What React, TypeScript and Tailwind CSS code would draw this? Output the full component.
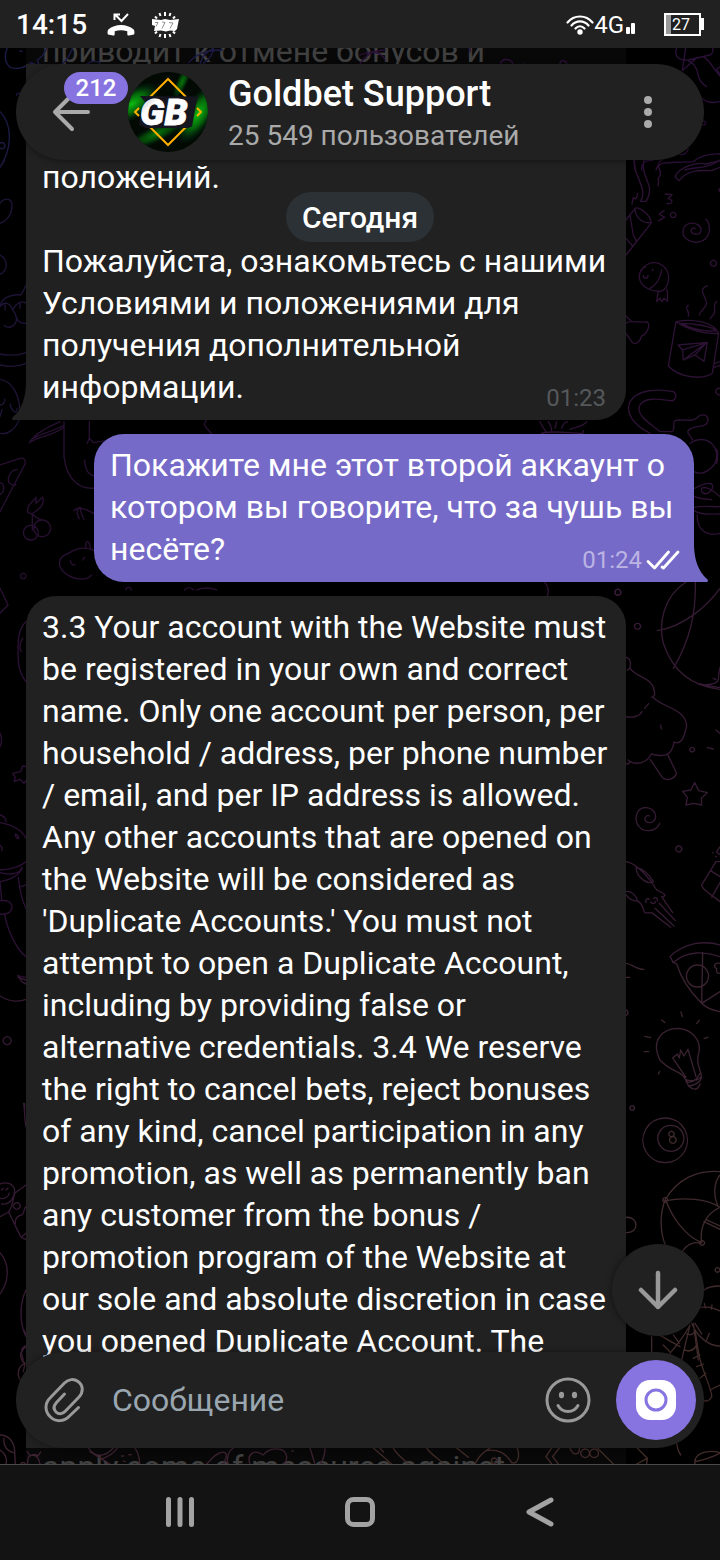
import { useState, type ReactNode } from "react";

interface Message {
  id: number;
  own: boolean;
  lines: string[];
  time?: string;
}

const messages: Message[] = [
  {
    id: 1,
    own: false,
    time: "01:23",
    lines: [
      "приводит к отмене бонусов и",
      "",
      "",
      "положений.",
      "",
      "Пожалуйста, ознакомьтесь с нашими",
      "Условиями и положениями для",
      "получения дополнительной",
      "информации.",
    ],
  },
  {
    id: 2,
    own: true,
    time: "01:24",
    lines: [
      "Покажите мне этот второй аккаунт о",
      "котором вы говорите, что за чушь вы",
      "несёте?",
    ],
  },
  {
    id: 3,
    own: false,
    lines: [
      "3.3 Your account with the Website must",
      "be registered in your own and correct",
      "name. Only one account per person, per",
      "household / address, per phone number",
      "/ email, and per IP address is allowed.",
      "Any other accounts that are opened on",
      "the Website will be considered as",
      "'Duplicate Accounts.' You must not",
      "attempt to open a Duplicate Account,",
      "including by providing false or",
      "alternative credentials. 3.4 We reserve",
      "the right to cancel bets, reject bonuses",
      "of any kind, cancel participation in any",
      "promotion, as well as permanently ban",
      "any customer from the bonus /",
      "promotion program of the Website at",
      "our sole and absolute discretion in case",
      "you opened Duplicate Account. The",
      "",
      "",
      "apply some of measures against",
    ],
  },
];

interface Tile {
  x: number;
  y: number;
  color: string;
  d: string;
}

// Each tile is drawn at 3x, then placed on the wallpaper
const tiles: Tile[] = [
  {
    x: 0,
    y: 0,
    color: "#1d1b47",
    d: "M22 144C12 165 14 190 32 203C50 208 75 205 92 188L118 198L112 180C125 172 135 160 140 144M60 153l6 2M218 144C210 165 200 180 188 192M262 192C275 180 290 180 300 190M566 188C590 160 620 150 668 150M600 192C605 170 620 155 640 145C640 165 625 180 610 190M50 285a6 8 0 1 1 12 6M0 335C35 370 40 440 0 502M0 430a9 9 0 1 1 0 14",
  },
  {
    x: 360,
    y: 0,
    color: "#2b1038",
    d: "M0 192C20 160 50 150 75 150M0 165C35 150 65 155 75 180M328 144q5 5 2 12M422 192c2-18 32-18 36 0M600 190c2-12 18-10 20 0M490 192h2M950 144C942 170 955 182 985 180L1050 165C1062 158 1058 144 1058 144M977 144L967 212L1012 172M985 182C1000 190 1012 200 1014 225Q1020 248 1040 260M1030 170C1050 180 1062 210 1080 228M1020 290C1040 310 1060 310 1080 305M1080 200l-10 8 10 14M1028 365a5 6 0 1 1 2 10M955 460c10 8 25 3 30-14M825 480C822 495 825 505 826 510M845 510C843 490 855 480 880 480M888 510C895 480 930 490 1000 485Q1030 460 1080 462M975 510C1010 500 1050 505 1080 480",
  },
  {
    x: 0,
    y: 160,
    color: "#1f1437",
    d: "M0 20Q10 10 14 0M0 130C15 110 38 115 36 140C34 170 15 185 0 190M0 285C25 300 25 330 0 343M0 435C10 410 40 402 62 405Q72 392 78 375M0 440C10 425 30 425 38 450C50 425 70 422 78 430M15 435v14M60 430v14M38 450l8 12C60 500 20 510 12 495M48 470C55 490 68 490 78 490M0 582C30 588 60 585 78 578M0 615C30 622 60 618 78 610M0 658C40 665 62 710 60 770C50 810 20 825 0 820M0 735c8 0 16-8 14-18M30 732C35 755 50 765 52 745M0 770l6-22",
  },
  {
    x: 0,
    y: 160,
    color: "#281032",
    d: "M180 785C150 800 110 815 88 848C120 825 160 830 192 800M100 835C130 818 160 815 190 796M192 785V890C200 960 240 990 284 984M268 785V835L262 850M268 835L280 848L320 842M254 900C255 930 268 945 284 948M0 915L60 895C72 893 78 900 75 912L0 1055M52 928C30 930 20 955 28 970Q38 978 48 974M0 968c14 4 16 26 0 36M97 1062V1110M97 1062C110 1080 125 1075 122 1082M84 1058C78 1035 100 1025 108 1012V1030L128 1012C135 1030 125 1045 95 1062ZM92 1096A22 22 0 1 0 93 1096M126 1080A25 25 0 1 0 127 1080M222 1052C230 1040 245 1040 284 1062M240 1042C228 1050 230 1065 238 1076M242 1042C240 1055 245 1065 252 1078M284 1172C240 1155 225 1170 195 1185C175 1195 175 1215 185 1230C215 1262 260 1265 275 1245M258 1165C255 1145 262 1140 268 1150L272 1166M211 1202c2 12 8 15 14 12M248 1200l6-8M69 1240a8 8 0 1 0 1 0M378 1290c0-10 14-10 16 0M553 1290c10-10 20-8 28 0M590 1290c20-8 40-8 60 0M635 822C625 805 605 800 618 782",
  },
  {
    x: 520,
    y: 160,
    color: "#2d1235",
    d: "M342 0C340 50 385 85 362 124H378C410 75 360 55 372 0M424 0C400 20 435 35 415 55V78M465 50C480 20 530 5 560 12L600 2M478 62C500 30 540 30 575 32L600 22M465 50L478 62M336 132L340 112Q350 125 353 100M436 102L456 104L444 116C462 118 458 135 440 130M432 152L418 162L434 172L416 182M459 157a8 8 0 1 0 1 0M318 180L345 145C355 138 395 165 393 190L318 285M345 145C345 170 365 190 390 188M330 165L340 225L350 245M318 235L338 258M513 212C515 225 540 228 543 212C545 195 525 188 510 190C485 195 485 225 497 235C520 255 560 250 568 215Q570 190 558 178M513 212C515 203 522 202 526 206M580 301a9 9 0 1 0 1 0M600 85l-4 5 4 6M403 308C375 308 355 335 358 355C365 385 400 395 420 395C445 390 452 350 440 330C430 315 420 308 403 308M375 322h1M397 328l2 4M370 346C370 358 384 358 384 346M425 330C420 360 410 375 390 385M415 392L410 425L420 415L426 425L432 415L442 424C442 410 445 400 440 388M562 378C530 390 560 410 560 430C555 450 540 450 538 465M505 436C490 445 510 450 505 468M590 425C575 435 590 450 582 462L570 476M468 485L445 618C480 655 550 660 577 640L596 520C540 525 490 500 468 485C520 475 580 485 596 520M485 490C520 510 560 515 590 512C570 498 520 490 485 490M474 555L562 547L552 604L525 585L490 600L488 570ZM488 570L560 548L490 600M525 585L558 550M585 610L600 605M582 622L600 616M318 490C330 480 360 488 380 486C392 490 385 520 365 528C360 545 345 560 335 545L318 520M318 468L335 485M600 685c-15-2-18 18 0 20M390 820C340 795 315 760 330 725C350 690 410 685 460 695C475 705 465 725 450 722C420 718 375 710 360 735C345 765 390 790 420 815H455C470 808 455 790 465 782C490 775 520 790 535 770C545 760 565 765 564 780C562 800 540 798 530 800C510 805 500 810 505 820L518 840M510 850C540 830 580 835 590 880C595 920 550 950 522 935M590 868C595 880 592 900 590 910M524 985C570 960 585 970 575 990C560 1010 540 1000 545 985C560 975 590 1000 600 1010M524 1010C545 1020 560 1015 575 1020M522 1052C550 1070 580 1060 600 1062M522 1042C560 1035 580 1042 600 1040M532 1065C530 1110 560 1130 600 1120M60 785C65 800 75 810 80 818M85 785Q95 800 95 812M105 805L110 785M125 805C130 790 138 785 142 785M150 808C170 800 190 800 200 785M64 820C100 810 150 820 188 820L190 812M75 1268Q90 1285 82 1308M293 1288a9 9 0 1 0 1 0M425 1268",
  },
  {
    x: 610,
    y: 580,
    color: "#361b34",
    d: "M23 28a9 9 0 1 0 1 0M82 130a9 9 0 1 0 1 0M228 6C160 50 145 130 160 190C190 280 250 320 330 328M256 6C258 100 240 180 190 265M142 152C220 140 290 80 330 25M265 312C290 318 320 312 325 300Q325 285 330 262M268 312C290 315 310 322 330 322M310 295l8 4M48 232C65 235 65 265 52 270M60 265C80 295 135 290 134 345L126 352M130 352C150 380 230 385 230 440C225 455 222 480 210 485Q200 492 192 486C190 505 180 525 160 526Q140 528 124 522C110 550 80 555 60 545M48 410C75 415 90 405 96 395M104 385l12-14M152 435l2 12M48 552C60 552 62 545 55 540M120 538L158 594C175 605 195 595 200 580L173 524M246 502a7 7 0 1 0 1 0M292 503l18 4M318 450l12 10M254 608L266 632L292 638L274 655L275 675L250 670L228 675L232 652L218 634L242 630ZM118 708C106 704 100 718 110 726C124 732 138 722 137 708C134 686 112 680 98 684C78 692 74 716 82 732C96 760 138 758 149 730M307 818h2M317 830h2M206 798a9 9 0 1 0 1 0M330 800l-10 16 10 8M330 845H318L275 915C275 925 290 935 330 965M302 872L330 890M305 952L330 908M48 845C80 850 120 895 140 930C160 940 172 945 160 950M78 862C80 895 115 915 130 905C115 880 95 865 78 862M48 935C65 930 85 955 80 962C70 965 55 955 48 945M80 962C100 970 98 985 104 998Q115 1000 125 998L182 1042M155 950L188 998M148 970L196 1022M135 985L192 1038M108 968c-4-10 5-14 10-10M130 955c8-4 12-2 12 8M122 966c6 8 14 5 14-2M190 1148L180 1130C220 1090 280 1080 330 1095M190 1148C230 1110 290 1115 330 1130",
  },
  {
    x: 610,
    y: 960,
    color: "#3b2331",
    d: "M48 10C65 10 75 28 102 28M48 52H60M48 150c8 2 8 14 0 16M188 6L200 12C215 60 245 100 275 130M278 -22L275 130L330 95M262 15A33 33 0 1 0 263 15M275 130C295 150 315 152 330 155M330 10c-18-4-20 12-10 16-2 12 2 14 10 14M155 180l10 8M213 156l4 14M268 181l-8 10M282 236l12-4M104 229l18 4M102 275h14M145 342l4-8M226 358C220 335 180 335 150 300C120 240 160 205 204 205C250 208 275 245 266 280C255 315 275 330 274 350C265 362 240 365 226 358M226 358L236 378C255 375 275 365 274 350M228 366Q255 372 270 340M236 378C250 392 265 390 270 372M228 352L188 294L202 282L208 294L212 270L222 288L234 268L258 350M66 437a7 7 0 1 0 1 0M165 474A67 67 0 1 0 166 474M182 496A39 39 0 1 0 183 496",
  },
  {
    x: 610,
    y: 960,
    color: "#3f2a2d",
    d: "M184 514A8 8 0 1 0 185 514M188 530A10 10 0 1 0 189 530M330 635C260 628 200 660 165 720C150 760 148 815 168 860M165 713a7 7 0 1 0 1 0M168 722C220 712 290 715 330 742C290 760 268 800 275 845M168 722C190 780 230 830 275 848M330 645C310 670 310 710 325 740M276 842a7 7 0 1 0 1 0M215 878C230 850 255 845 272 850M282 785L330 808M290 780L330 798M48 772C88 770 88 820 48 818M322 923a7 7 0 1 0 1 0M282 990C295 980 310 978 330 978M272 1043C295 1035 320 1050 330 1053M283 1030l3 14M306 1035l-2 12M245 1090C260 1130 300 1160 330 1158M255 1090L275 1122M298 1120L290 1140M180 1180C205 1150 225 1125 240 1095L215 1200M250 1090L265 1200M230 1122C240 1126 248 1124 252 1118M222 1170C235 1175 250 1172 258 1160M125 1130V1175M190 1125L208 1150",
  },
  {
    x: 0,
    y: 1330,
    color: "#3c2230",
    d: "M72 0L78 15M78 50C55 65 60 90 75 100C50 110 50 140 65 155M75 100L70 125M0 315C25 315 45 335 44 370L46 402M12 325C8 350 25 365 40 368M0 360C15 370 22 385 18 402M62 402c2-6 12-6 14 0M82 365L90 378C95 372 110 372 114 378L122 366M82 402C85 390 80 375 100 375C115 378 118 390 120 402M265 354C290 390 320 375 340 354M300 388C330 380 345 365 352 354M270 365L330 402M365 378h6M386 374h8M370 394h6M405 354C415 370 420 385 418 402M620 402C640 380 660 360 675 368Q685 375 670 402M683 402C680 375 690 360 700 354M750 402C740 375 760 355 790 375C800 355 855 345 860 380C860 392 855 400 850 402M876 363h4M930 354L945 402M975 354C975 375 970 390 960 402",
  },
  {
    x: 360,
    y: 1330,
    color: "#412b28",
    d: "M40 354L95 402M60 354l10 12M100 354C110 375 130 385 145 402M200 354C215 375 235 385 250 402M290 354L325 382M345 402C360 370 380 360 390 354M380 362C420 355 440 375 455 398C475 405 480 375 472 354M402 384a8 8 0 1 0 1 0M575 354L558 380L575 402M598 354L578 380L595 402M630 354C640 380 660 375 658 354M675 357a13 13 0 1 0 1 0M702 357a13 13 0 1 0 1 0M712 354L760 402M832 354L862 385L860 402M830 402L862 385M890 10L960 50M910 45L930 65M1005 0L1018 80C1030 130 1060 190 1055 200C1048 215 1035 215 1030 210M975 60C995 68 1005 55 1010 45M1000 85L1020 75M1010 110L1030 102M1020 145L1038 130M1050 180L1080 165M950 340Q952 360 962 375M1005 402C1000 370 1040 358 1080 368M1005 395C1030 390 1060 380 1080 370",
  },
  {
    x: 0,
    y: 580,
    color: "#2c1136",
    d: "M0 25L24 75L0 100M78 125C55 145 52 180 55 245Q60 285 78 305M68 175C58 190 58 205 64 215M0 460C6 470 6 490 0 500M78 560L68 558L62 575L38 580L46 592L42 605L60 598L72 610L78 602M0 705C12 708 18 715 18 725M0 728C40 735 65 750 78 775M46 762q10 4 10 14q-10-2-10-14M0 796q8 6 6 16M0 870C30 868 60 860 78 845M0 878C20 885 60 885 66 862M0 905C30 900 55 890 66 865M55 892C58 920 65 960 78 985M0 962C20 960 38 965 36 985C32 1000 15 1005 0 1002M62 920L78 915M14 1004C22 1050 50 1110 78 1130M0 905L5 960M54 1188L78 1192",
  },
  {
    x: 0,
    y: 960,
    color: "#351a33",
    d: "M54 46C60 60 70 70 78 72M54 52L78 60M0 108C25 125 55 127 78 118M21 230a12 12 0 1 0 1 0M70 430C75 440 72 470 78 500M74 430v20M0 672C20 665 40 670 44 690C42 715 30 735 5 732M2 715C10 718 25 712 28 700M5 690l5-5M18 690l6-6M0 770L26 756L62 830C68 838 72 835 78 838M26 756C40 735 40 710 44 700M44 700L78 675M50 728a10 10 0 1 0 1 0M78 740C70 745 75 760 65 765C50 768 45 775 46 790M78 820L66 830M0 878C28 910 30 960 0 1002M78 990C58 1030 58 1090 78 1130M70 1200C60 1175 65 1160 78 1158",
  },
];

function Wallpaper({ className }: { className: string }) {
  return (
    <svg
      className={`absolute inset-x-0 w-full ${className}`}
      viewBox="0 48 720 1416"
      fill="none"
      strokeWidth="4"
      strokeLinecap="round"
      strokeLinejoin="round"
      aria-hidden="true"
    >
      {tiles.map((tile, i) => (
        <path
          key={i}
          transform={`translate(${tile.x} ${tile.y}) scale(.3333)`}
          d={tile.d}
          stroke={tile.color}
        />
      ))}
    </svg>
  );
}

function StatusBar() {
  return (
    <div className="flex h-12 shrink-0 items-center bg-[#212121] px-4 pt-0.5 text-white">
      <span className="text-[28px] leading-8 font-medium">14:15</span>
      <svg className="ml-5 h-6 w-7" viewBox="0 0 28 24" fill="none" aria-hidden="true">
        <path d="M8 1.5l6.5 6.500L21 1M7.500 7V1.500H13" stroke="#fff" strokeWidth="2" />
        <path
          d="M1 21.500c-.8-1-.5-4 .3-5C8 10.500 20 10.500 26.700 16.500c.8 1 1.100 4 .3 5l-5 1c-1 .2-1.700-.3-1.700-1.200v-3c-4-1.300-8.600-1.300-12.600 0v3c0 .9-.7 1.400-1.700 1.200z"
          fill="#fff"
        />
      </svg>
      <svg className="ml-4 h-7 w-7" viewBox="0 0 28 28" aria-hidden="true">
        <path
          d="M14 1v4M14 23v4M8.500 2l1 3M19.500 2l-1 3M8.500 26l1-3M19.500 26l-1-3M4 5.500l2 2M24 5.500l-2 2M4 22.500l2-2M24 22.500l-2-2"
          stroke="#fff"
          strokeWidth="2"
        />
        <path d="M1 8l9 1 4-1 5 1 9-1-2 10-2 2-5-.5-4 1-5-1-7 .5L4 15l-3-1z" fill="#fff" />
        <path d="M4 11.500h3l-2 4M11 11l3 .5-3 6M18 11.500l4 .5-3 5.500" fill="none" stroke="#777" strokeWidth=".8" />
      </svg>
      <div className="ml-auto flex items-center">
        <svg className="h-5 w-7" viewBox="0 0 28 20" fill="none" stroke="#fff" strokeWidth="2.2" strokeLinecap="round" aria-hidden="true">
          <path d="M1.500 7.500C8-.5 20-.5 26.500 7.500M5.500 10.500c4.500-5.500 12.500-5.500 17 0M9.500 13.500c2.500-3 6.500-3 9 0" />
          <circle cx="14" cy="17" r="1.6" fill="#fff" />
        </svg>
        <span className="text-2xl leading-6">4G</span>
        <svg className="h-5 w-3" viewBox="0 0 12 20" fill="#fff" aria-hidden="true">
          <rect x="2" y="12" width="4" height="7" rx="1" />
          <rect x="7" y="8" width="4" height="11" rx="1" />
        </svg>
        <svg className="ml-7 h-6 w-10" viewBox="0 0 40 24" aria-hidden="true">
          <rect x="1" y="1" width="35" height="21" fill="none" stroke="#fff" strokeWidth="2" />
          <rect x="37" y="5" width="3" height="12" fill="#fff" />
          <rect x="2" y="2" width="5" height="19" fill="#999" />
          <text x="8" y="17" fontSize="16" fill="#fff">
            27
          </text>
        </svg>
      </div>
    </div>
  );
}

function Avatar() {
  return (
    <svg className="ml-9 size-20 shrink-0" viewBox="0 0 80 80" role="img" aria-label="Goldbet">
      <defs>
        <clipPath id="round">
          <circle cx="40" cy="40" r="40" />
        </clipPath>
        <radialGradient id="glow">
          <stop offset="0" stopColor="#0bbd12" />
          <stop offset=".5" stopColor="#078a0d" stopOpacity=".7" />
          <stop offset="1" stopColor="#032" stopOpacity="0" />
        </radialGradient>
        <linearGradient id="steel" x1="0" y1="0" x2="1" y2="1">
          <stop offset="0" stopColor="#999" />
          <stop offset=".3" stopColor="#fff" />
          <stop offset=".8" stopColor="#fff" />
          <stop offset="1" stopColor="#999" />
        </linearGradient>
      </defs>
      <g clipPath="url(#round)">
        <rect width="80" height="80" fill="#020a03" />
        <ellipse cx="4" cy="32" rx="32" ry="15" transform="rotate(-35 4 32)" fill="url(#glow)" />
        <ellipse cx="70" cy="42" rx="34" ry="15" transform="rotate(-58 70 42)" fill="url(#glow)" />
        <ellipse cx="28" cy="62" rx="36" ry="9" transform="rotate(-25 28 62)" fill="url(#glow)" opacity=".6" />
        <ellipse cx="54" cy="10" rx="20" ry="6" transform="rotate(-65 54 10)" fill="url(#glow)" opacity=".6" />
      </g>
      <path
        d="M22 25L40 7l18 18M22 55l18 18 18-18M11 36l-4 4 4 4M69 36l4 4-4 4"
        fill="none"
        stroke="#ffb000"
        strokeWidth="2"
      />
      <path d="M12 24l58 .5-2 8-4 22-4 1.500H18l-7-3 2-12 4-11z" fill="#15151f" />
      <text
        x="12"
        y="53"
        fontSize="37"
        fontWeight="900"
        fontStyle="italic"
        fill="url(#steel)"
        stroke="#fff"
        strokeWidth=".8"
      >
        GB
      </text>
    </svg>
  );
}

function ChatHeader() {
  return (
    <header className="absolute inset-x-4 top-4 flex h-24 items-center rounded-full bg-[#212121] shadow-[0_1px_6px_rgba(0,0,0,0.4)]">
      <button
        type="button"
        aria-label="Back"
        className="relative ml-9 flex h-12 w-10 shrink-0 items-center text-[#aaaaaa]"
      >
        <svg className="size-10" viewBox="0 0 40 40" fill="none" stroke="currentColor" strokeWidth="4" strokeLinecap="round" strokeLinejoin="round">
          <path d="M36 20H3M20 3L3 20l17 17" />
        </svg>
        <span className="absolute -top-4 left-3 flex h-8 w-16 items-center justify-center rounded-full bg-[#8774e1] text-2xl font-medium text-white">
          212
        </span>
      </button>
      <Avatar />
      <div className="ml-5 min-w-0 flex-1 pt-1">
        <h1 className="truncate text-[36px] leading-11 font-medium text-white">Goldbet Support</h1>
        <p className="truncate text-[28px] leading-10 text-[#aaaaaa]">25 549 пользователей</p>
      </div>
      <button type="button" aria-label="Menu" className="mr-8 flex size-12 items-center justify-center">
        <svg className="h-8 w-2" viewBox="0 0 8 32" fill="#aaaaaa">
          <circle cx="4" cy="4" r="4" />
          <circle cx="4" cy="16" r="4" />
          <circle cx="4" cy="28" r="4" />
        </svg>
      </button>
    </header>
  );
}

function Bubble({ message }: { message: Message }) {
  const { own, lines, time } = message;
  return (
    <article
      className={`relative w-full max-w-[600px] rounded-[30px] pt-2.5 pb-3 pl-4 text-[32px] leading-[42px] text-white ${
        own
          ? "self-end rounded-br-none bg-[#766ac8] pr-3.5"
          : "self-start rounded-bl-none bg-[#212121] pr-5"
      }`}
    >
      <p>
        {lines.map((line, i) => (
          <span key={i} className="block h-[42px] whitespace-nowrap">
            {line}
          </span>
        ))}
      </p>
      {time && (
        <div
          className={`-mt-5 flex items-center justify-end gap-1 text-2xl leading-5 ${
            own ? "text-[#bbb4e3]" : "text-[#55585b]"
          }`}
        >
          <time>{time}</time>
          {own && (
            <svg className="h-5 w-[34px]" viewBox="0 0 34 20" fill="none" stroke="#fff" strokeWidth="2.8" strokeLinecap="round" strokeLinejoin="round" aria-label="Read">
              <path d="M2 11.500L8.500 18 22.500 2M16 17l1.500 1L32 2" />
            </svg>
          )}
        </div>
      )}
      <svg
        className={`absolute bottom-0 h-9 w-3.5 ${own ? "left-full" : "right-full"}`}
        viewBox="0 0 14 36"
        fill={own ? "#766ac8" : "#212121"}
        aria-hidden="true"
      >
        {own ? (
          <path d="M0 0C.5 14 4 25 13.500 33.500c.8 1.200.4 2.500-1 2.500H0z" />
        ) : (
          <path d="M14 0C13.500 14 10 25 .5 33.500c-.8 1.200-.4 2.500 1 2.500H14z" />
        )}
      </svg>
    </article>
  );
}

function Composer() {
  const [text, setText] = useState("");
  return (
    <form
      onSubmit={(e) => e.preventDefault()}
      className="absolute inset-x-4 bottom-4 flex h-24 items-center rounded-full bg-[#212121] pr-2 pl-7 shadow-[0_0_6px_rgba(0,0,0,0.4)]"
    >
      <button type="button" aria-label="Attach" className="shrink-0">
        <svg className="h-12 w-10" viewBox="0 0 40 48" fill="none" stroke="#999999" strokeWidth="3" strokeLinecap="round" strokeLinejoin="round">
          <path d="M34.500 31.500L25.500 40C20 46 11.500 46 6.500 41c-6-5.500-6-14 0-19.500L20.500 7c4-4 9.500-4.500 13.500-1.500 5.500 4 5.500 10.500 1 15.500L21.500 35c-3 3.500-7 3.500-9.500 1s-2.500-6 .5-9.500L20.500 18" />
        </svg>
      </button>
      <input
        type="text"
        aria-label="Сообщение"
        placeholder="Сообщение"
        value={text}
        onChange={(e) => setText(e.target.value)}
        className="ml-7 min-w-0 flex-1 bg-transparent text-[32px] leading-10 text-white outline-none placeholder:text-[#9aa7b0]"
      />
      <button type="button" aria-label="Emoji" className="mr-6 shrink-0">
        <svg className="size-12" viewBox="0 0 48 48" fill="none" stroke="#999999" strokeWidth="3" strokeLinecap="round">
          <circle cx="24" cy="24" r="21" />
          <path d="M14 29.500c4.500 8 15.500 8 20 0" />
          <ellipse cx="17.5" cy="19" rx="2.6" ry="3.2" fill="#999999" stroke="none" />
          <ellipse cx="30.5" cy="19" rx="2.6" ry="3.2" fill="#999999" stroke="none" />
        </svg>
      </button>
      <button
        type="button"
        aria-label="Record video"
        className="flex size-20 shrink-0 items-center justify-center rounded-full bg-[#8774e1]"
      >
        <svg className="size-10" viewBox="0 0 40 40">
          <rect width="40" height="40" rx="14" fill="#fff" />
          <circle cx="20" cy="20" r="10" fill="#fff" stroke="#8774e1" strokeWidth="3" />
        </svg>
      </button>
    </form>
  );
}

function NavButton({ label, children }: { label: string; children: ReactNode }) {
  return (
    <button type="button" aria-label={label}>
      <svg className="size-8" viewBox="0 0 32 32" fill="none" stroke="#a3a3a3" strokeWidth="5" strokeLinecap="round" strokeLinejoin="round">
        {children}
      </svg>
    </button>
  );
}

export default function App() {
  return (
    <div className="flex h-screen flex-col overflow-hidden bg-black font-['Roboto',sans-serif]">
      <StatusBar />

      <main className="relative min-h-0 flex-1 overflow-hidden">
        <Wallpaper className="top-0" />

        <div className="relative -mt-7 flex flex-col gap-3.5 px-[26px]">
          {messages.map((m) => (
            <Bubble key={m.id} message={m} />
          ))}
        </div>

        {/* Faded edges, the wallpaper shows through them */}
        <div className="absolute inset-x-0 top-0 h-4 overflow-hidden bg-black/75">
          <Wallpaper className="top-0" />
        </div>
        <div className="absolute inset-x-0 bottom-0 h-4 overflow-hidden bg-black/75">
          <Wallpaper className="bottom-0" />
        </div>

        <div className="absolute inset-x-0 top-36 flex justify-center">
          <span className="flex h-[50px] items-center rounded-full bg-[#2b3135] px-4 text-[30px] font-medium text-white">
            Сегодня
          </span>
        </div>

        <ChatHeader />

        <button
          type="button"
          aria-label="Scroll down"
          className="absolute right-4 bottom-32 flex size-[92px] items-center justify-center rounded-full bg-[#212121] shadow-[0_0_6px_rgba(0,0,0,0.5)]"
        >
          <svg className="size-10" viewBox="0 0 40 40" fill="none" stroke="#999999" strokeWidth="4.5" strokeLinecap="round" strokeLinejoin="round">
            <path d="M20 3v34M3 20l17 17 17-17" />
          </svg>
        </button>

        <Composer />
      </main>

      <nav className="flex h-24 shrink-0 items-center justify-center gap-[148px] border-t border-[#4a4a4a] bg-[#131313] pb-0.5">
        <NavButton label="Recent apps">
          <path d="M4.500 3.500v25M16 3.500v25M27.500 3.500v25" />
        </NavButton>
        <NavButton label="Home">
          <rect x="3.5" y="3.5" width="25" height="25" rx="6" />
        </NavButton>
        <NavButton label="Back">
          <path d="M27 4L5 16l22 12" />
        </NavButton>
      </nav>
    </div>
  );
}
